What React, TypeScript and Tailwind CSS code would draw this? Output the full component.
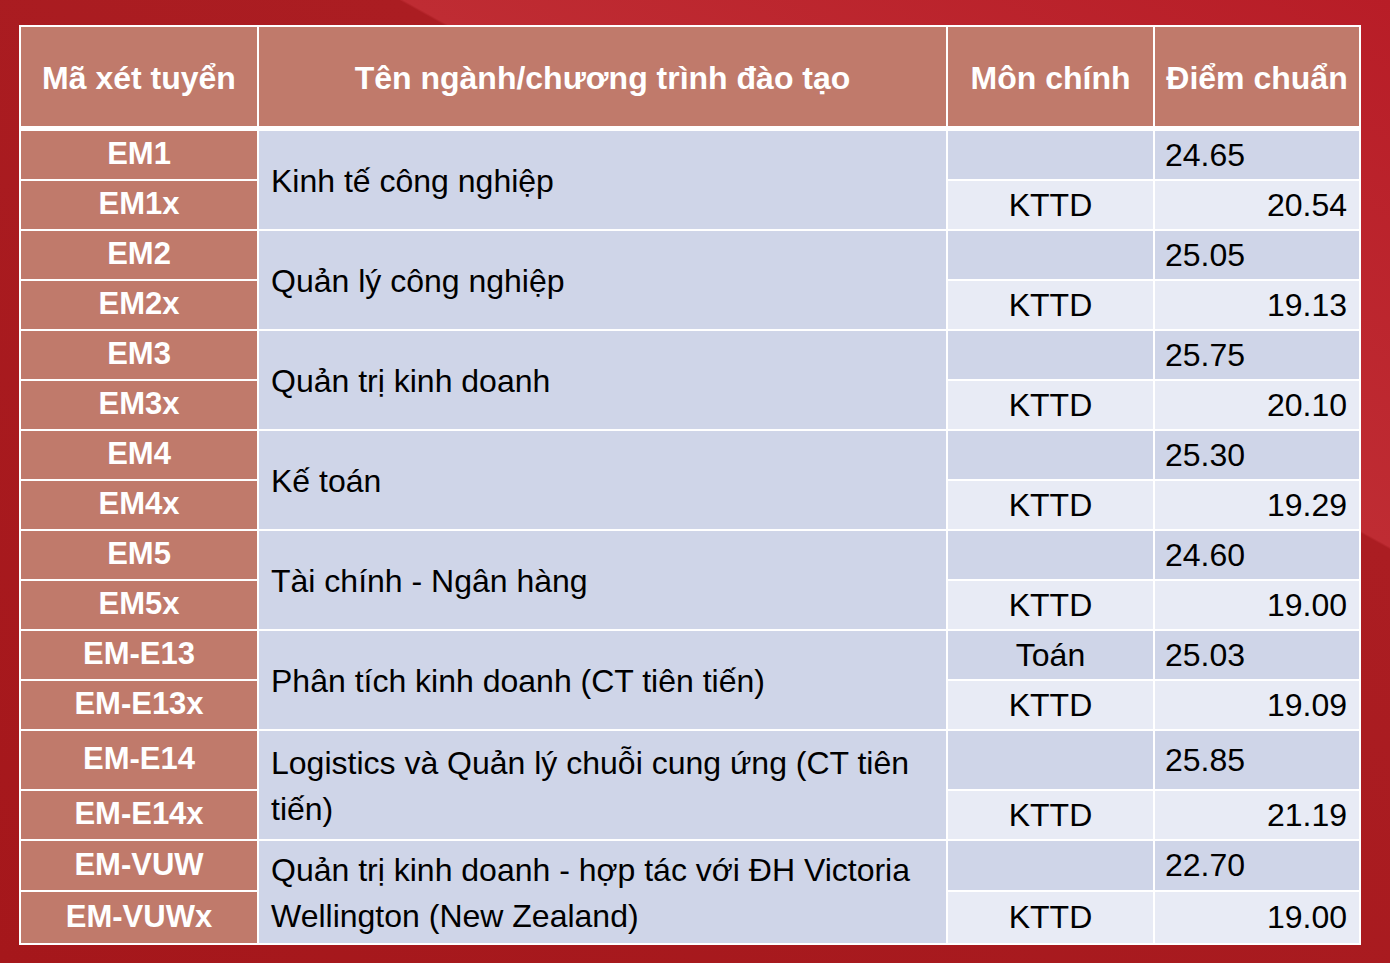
import React from "react";

interface Group {
  codes: [string, string];
  name: string;
  mon: [string, string];
  diem: [string, string];
  heights?: [string, string];
}

const groups: Group[] = [
  { codes: ["EM1", "EM1x"], name: "Kinh tế công nghiệp", mon: ["", "KTTD"], diem: ["24.65", "20.54"] },
  { codes: ["EM2", "EM2x"], name: "Quản lý công nghiệp", mon: ["", "KTTD"], diem: ["25.05", "19.13"] },
  { codes: ["EM3", "EM3x"], name: "Quản trị kinh doanh", mon: ["", "KTTD"], diem: ["25.75", "20.10"] },
  { codes: ["EM4", "EM4x"], name: "Kế toán", mon: ["", "KTTD"], diem: ["25.30", "19.29"] },
  { codes: ["EM5", "EM5x"], name: "Tài chính - Ngân hàng", mon: ["", "KTTD"], diem: ["24.60", "19.00"] },
  {
    codes: ["EM-E13", "EM-E13x"],
    name: "Phân tích kinh doanh (CT tiên tiến)",
    mon: ["Toán", "KTTD"],
    diem: ["25.03", "19.09"],
  },
  {
    codes: ["EM-E14", "EM-E14x"],
    name: "Logistics và Quản lý chuỗi cung ứng (CT tiên tiến)",
    mon: ["", "KTTD"],
    diem: ["25.85", "21.19"],
    heights: ["h-[60px]", "h-[49px]"],
  },
  {
    codes: ["EM-VUW", "EM-VUWx"],
    name: "Quản trị kinh doanh - hợp tác với ĐH Victoria Wellington (New Zealand)",
    mon: ["", "KTTD"],
    diem: ["22.70", "19.00"],
    heights: ["h-[51px]", "h-[53px]"],
  },
];

const cell = "border-2 border-white p-0";

export default function App() {
  return (
    <div
      className="w-[1390px] h-[963px] overflow-hidden pt-[25px] pl-[19px] bg-[linear-gradient(29deg,#a5171b_0%,#ab1d22_68.3%,#bf2c33_68.45%,#b81d27_100%)]"
      style={{ fontFamily: '"Liberation Sans", Arial, sans-serif' }}
    >
      <table className="w-[1340px] table-fixed border-collapse">
        <colgroup>
          <col className="w-[238px]" />
          <col className="w-[689px]" />
          <col className="w-[207px]" />
          <col className="w-[206px]" />
        </colgroup>
        <thead>
          <tr className="h-[102px] bg-[#c07a6b] text-white text-[32px] font-bold">
            <th className={`${cell} border-b-[5px] pt-1 text-center`}>Mã xét tuyển</th>
            <th className={`${cell} border-b-[5px] pt-1 text-center`}>Tên ngành/chương trình đào tạo</th>
            <th className={`${cell} border-b-[5px] pt-1 text-center`}>Môn chính</th>
            <th className={`${cell} border-b-[5px] pt-1 text-center`}>Điểm chuẩn</th>
          </tr>
        </thead>
        <tbody className="text-[32px] text-black">
          {groups.map((g) => (
            <React.Fragment key={g.codes[0]}>
              <tr className={g.heights ? g.heights[0] : "h-[49.75px]"}>
                <td className={`${cell} bg-[#c07a6b] text-white font-bold text-[31px] text-center`}>{g.codes[0]}</td>
                <td rowSpan={2} className={`${cell} bg-[#cfd5e8] pl-3 pr-2 pt-0.5 leading-[46px]`}>
                  {g.name}
                </td>
                <td className={`${cell} bg-[#cfd5e8] text-center`}>{g.mon[0]}</td>
                <td className={`${cell} bg-[#cfd5e8] pl-2.5 text-left`}>{g.diem[0]}</td>
              </tr>
              <tr className={g.heights ? g.heights[1] : "h-[49.75px]"}>
                <td className={`${cell} bg-[#c07a6b] text-white font-bold text-[31px] text-center`}>{g.codes[1]}</td>
                <td className={`${cell} bg-[#e8ebf5] text-center`}>{g.mon[1]}</td>
                <td className={`${cell} bg-[#e8ebf5] pr-3 text-right`}>{g.diem[1]}</td>
              </tr>
            </React.Fragment>
          ))}
        </tbody>
      </table>
    </div>
  );
}
